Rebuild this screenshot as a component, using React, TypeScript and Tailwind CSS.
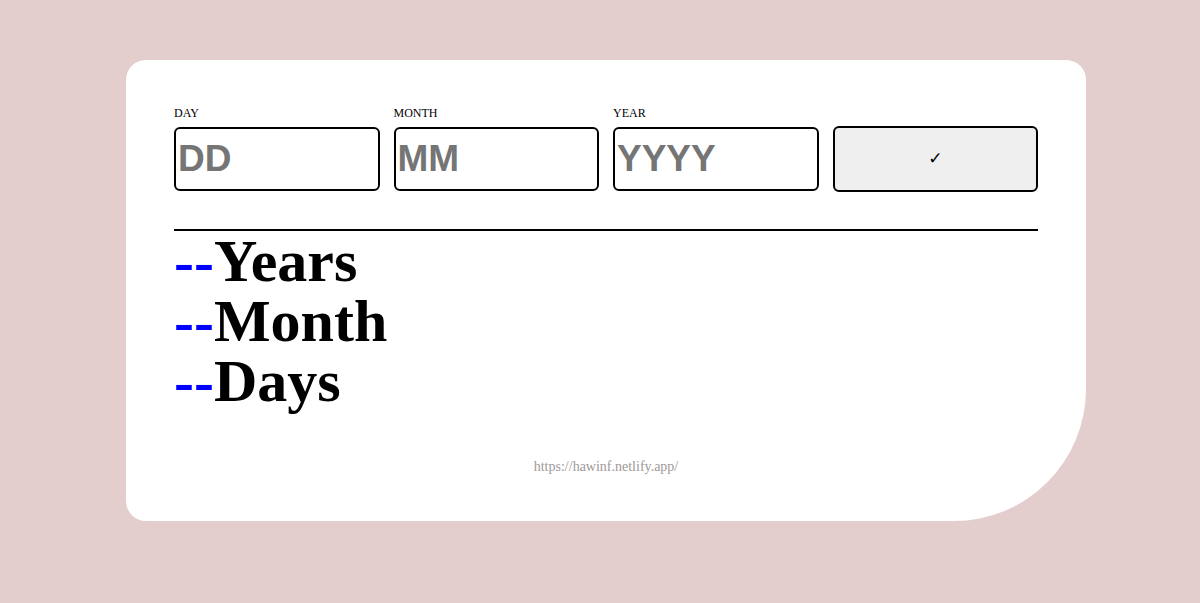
import { useState } from "react";

const fields = [
  { label: "DAY", placeholder: "DD" },
  { label: "MONTH", placeholder: "MM" },
  { label: "YEAR", placeholder: "YYYY" },
];

const results = ["Years", "Month", "Days"];

const App = () => {
  const [values, setValues] = useState<string[]>(["", "", ""]);

  return (
    <div className="min-h-[603px] w-full bg-[#e3cdcd] pt-[60px] pl-[126px] overflow-hidden">
      <div className="w-[960px] h-[461px] bg-white rounded-tl-[20px] rounded-tr-[20px] rounded-bl-[20px] rounded-br-[132px] px-[48px] pt-[46px] font-['Liberation_Serif',serif]">
        {/* Inputs */}
        <div className="grid grid-cols-4 gap-[14px] items-end">
          {fields.map((f, i) => (
            <div key={f.label} className="flex flex-col">
              <label className="text-[12px] leading-[14px] text-black mb-[7px]">{f.label}</label>
              <input
                value={values[i]}
                onChange={(e) => {
                  const next = [...values];
                  next[i] = e.target.value;
                  setValues(next);
                }}
                placeholder={f.placeholder}
                className="h-[64px] w-full border-2 border-black rounded-[6px] px-[2px] text-[37px] font-bold font-['Liberation_Sans',Arial,sans-serif] placeholder:text-[#757575] outline-none"
              />
            </div>
          ))}
          <button className="h-[66px] mb-[-1px] bg-[#efefef] border-2 border-black rounded-[6px] text-[17px] font-['DejaVu_Sans',sans-serif] text-black">
            ✓
          </button>
        </div>

        <hr className="mt-[38px] border-0 border-t-2 border-black" />

        {/* Results */}
        <div className="font-bold text-[60px] leading-[60px]">
          {results.map((r) => (
            <div key={r}>
              <span className="text-[#0000ff]">--</span>
              {r}
            </div>
          ))}
        </div>

        <p className="mt-[45px] text-center text-[14px] text-[#a09999]">https://hawinf.netlify.app/</p>
      </div>
    </div>
  );
};

export default App;
